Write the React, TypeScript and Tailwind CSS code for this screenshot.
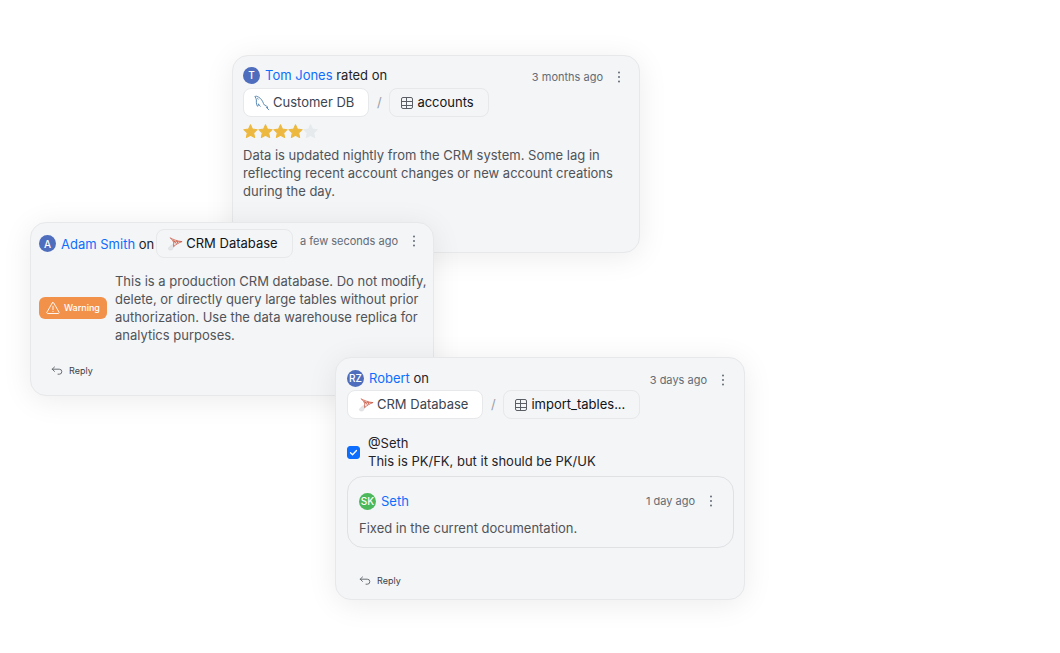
import type { ReactNode } from 'react';
import clsx from 'clsx';

interface HeaderProps {
  initials: string;
  color: string;
  name: string;
  children?: ReactNode;
}

interface ChipProps {
  icon: ReactNode;
  children: ReactNode;
  filled?: boolean;
}

const MySqlIcon = () => (
  <svg width="16" height="16" viewBox="0 0 16 16" fill="none" stroke="#4a7fae" strokeLinecap="round" strokeLinejoin="round" className="shrink-0">
    <path d="M1.2 1.8C1 1 2 .8 2.8 1.4c2.4.6 4.6 2.6 6 5.4.5 1.2.8 2.4 1.6 3.2l2.2 1.2 1.4 1.2-1.6.1 2.4 2.2" strokeWidth="0.9" />
    <path d="M1.2 1.8c.6 1.2 1 2 1.2 3.2.1 1.4-.3 3 .2 4.6.3 1 1 2 1.400 1.600.4-.5 0-1.600.4-2.400.6.8 1 1.800 1.800 2.500" strokeWidth="0.9" />
    <path d="M3.6 3.4l.5.8" strokeWidth="0.8" />
  </svg>
);

const SqlServerIcon = () => (
  <svg width="16" height="16" viewBox="0 0 16 16" fill="none" strokeLinecap="round" strokeLinejoin="round" className="shrink-0">
    <path d="M6 8.4C3.600 9.600 1.600 11.200 1.400 12.800c.2 1.200 2 1.400 3.800.8l1.600-3z" fill="#e4e5e8" stroke="#d3d5d8" strokeWidth="0.6" />
    <path d="M3.400 2c1.600 1.600 2.300 2.700 2.800 3.800l8.600-.2C10.600 5 6.700 3.700 3.400 2z" fill="#f0d3c8" stroke="#cf6350" strokeWidth="0.7" />
    <path d="M14.800 5.600C11.600 6.800 9 8.400 6.600 10.600l.2-4.600M6.400 4l2.800 3.600M9.800 4.800l.8 2" stroke="#c9503c" strokeWidth="0.8" />
  </svg>
);

const TableIcon = () => (
  <svg width="14" height="14" viewBox="0 0 14 14" fill="none" stroke="#5a5e65" className="shrink-0">
    <rect x="1.5" y="1.5" width="11" height="11" rx="1.5" />
    <path d="M1.5 5.5h11M1.5 9.5h11M6.5 1.5v11" />
  </svg>
);

const ReplyIcon = () => (
  <svg width="12" height="12" viewBox="0 0 12 12" fill="none" stroke="#5b6067" strokeWidth="0.9" strokeLinecap="round" strokeLinejoin="round">
    <path d="M3.5 2L1.2 4.200l2.300 2.200M1.200 4.200h7.100a2.500 2.500 0 0 1 0 5H7" />
  </svg>
);

const WarningIcon = () => (
  <svg width="14" height="14" viewBox="0 0 14 14" fill="none" stroke="#fff" strokeWidth="0.9" strokeLinecap="round" strokeLinejoin="round">
    <path d="M6.300 1.900L.9 11.300c-.3.600.1 1.200.7 1.200h10.800c.6 0 1-.6.7-1.200L7.700 1.900c-.3-.5-1.100-.5-1.400 0z" />
    <path d="M7 5.200v3.400M7 10.300v.2" />
  </svg>
);

const Star = ({ on }: { on: boolean }) => (
  <svg width="15" height="15" viewBox="1 1 22 22" fill={on ? '#edb83f' : '#e6eaec'} stroke={on ? '#edb83f' : '#e6eaec'} strokeWidth="1.5" strokeLinejoin="round">
    <path d="M12 2.200l2.900 6.300 6.900.8-5.100 4.700 1.400 6.800L12 17.400l-6.100 3.400 1.400-6.800-5.100-4.700 6.900-.8z" />
  </svg>
);

const Header: React.FC<HeaderProps> = ({ initials, color, name, children }) => (
  <div className="flex items-center gap-[5px]">
    <span className={clsx('flex size-[17px] shrink-0 items-center justify-center rounded-full text-[10px] font-medium leading-none text-white', color)}>
      {initials}
    </span>
    <p className="whitespace-nowrap text-[13px] leading-5 text-[#1f2328]">
      <a href="#" className="text-[#0d6efd]">{name}</a> {children}
    </p>
  </div>
);

const Chip: React.FC<ChipProps> = ({ icon, children, filled }) => (
  <a
    href="#"
    className={clsx(
      'flex h-[29px] items-center gap-[3px] whitespace-nowrap rounded-lg border border-[#e6e8ea] pl-[10px] pr-[14px] text-[13px]',
      filled ? 'bg-white text-[#3c4450]' : 'text-[#111317]'
    )}
  >
    {icon}
    {children}
  </a>
);

const Meta = ({ time }: { time: string }) => (
  <div className="ml-auto flex shrink-0 items-center gap-2">
    <time className="whitespace-nowrap text-[11px] leading-4 text-[#646b75]">{time}</time>
    <button type="button" aria-label="More actions" className="flex h-4 w-4 items-center justify-center">
      <svg width="4" height="12" viewBox="0 0 4 12" fill="#565d68">
        <circle cx="2" cy="1.5" r="0.9" />
        <circle cx="2" cy="6" r="0.9" />
        <circle cx="2" cy="10.5" r="0.9" />
      </svg>
    </button>
  </div>
);

const Reply = () => (
  <button type="button" className="flex items-center gap-[6px] text-[9px] leading-4 text-[#3c4148]">
    <ReplyIcon />
    Reply
  </button>
);

const cardStyle = 'rounded-[16px] border border-[#e6e8ea] bg-[#f3f5f7] shadow-[0_4px_30px_rgba(0,0,0,0.08)]';

export default function App() {
  return (
    <main className="flex min-h-screen flex-col items-start bg-white pt-[55px] font-['Inter',sans-serif]">
      {/* Rating */}
      <article className={clsx('ml-[232px] w-[408px] px-[10px] pt-[9px] pb-[52px]', cardStyle)}>
        <div className="flex items-end pr-[2px]">
          <Header initials="T" color="bg-[#4e6dbd]" name="Tom Jones">rated on</Header>
          <Meta time="3 months ago" />
        </div>
        <div className="mt-[3px] flex items-center">
          <Chip icon={<MySqlIcon />} filled>Customer DB</Chip>
          <span className="w-5 text-center text-[13px] text-[#9aa0a7]">/</span>
          <Chip icon={<TableIcon />}>accounts</Chip>
        </div>
        <div className="mt-[7px] flex" role="img" aria-label="4 out of 5 stars">
          {[1, 2, 3, 4, 5].map((n) => (
            <Star key={n} on={n <= 4} />
          ))}
        </div>
        <p className="mt-[7px] text-[13px] leading-[18px] text-[#505358]">
          Data is updated nightly from the CRM system. Some lag in reflecting recent account changes or new account creations during the day.
        </p>
      </article>

      {/* Warning */}
      <article className={clsx('-mt-[31px] ml-[30px] w-[404px] pl-2 pr-1 pt-[6px] pb-4', cardStyle)}>
        <div className="flex items-start pr-[7px]">
          <div className="flex items-center gap-[2px]">
            <Header initials="A" color="bg-[#4e6dbd]" name="Adam Smith">on</Header>
            <Chip icon={<SqlServerIcon />}>CRM Database</Chip>
          </div>
          <div className="ml-auto pt-1">
            <Meta time="a few seconds ago" />
          </div>
        </div>
        <div className="mt-[14px] flex items-center gap-2">
          <span className="flex h-[22px] shrink-0 items-center gap-1 rounded-md bg-[#f2914a] px-[7px] text-[9px] font-medium text-white">
            <WarningIcon />
            Warning
          </span>
          <p className="text-[13px] leading-[18px] text-[#505358]">
            This is a production CRM database. Do not modify, delete, or directly query large tables without prior authorization. Use the data warehouse replica for analytics purposes.
          </p>
        </div>
        <div className="mt-[19px] pl-3">
          <Reply />
        </div>
      </article>

      {/* Task with a reply */}
      <article className={clsx('-mt-[39px] ml-[335px] w-[410px] pl-[11px] pr-[10px] pt-[10px] pb-[10px]', cardStyle)}>
        <div className="flex items-end pr-[3px]">
          <Header initials="RZ" color="bg-[#4e6dbd]" name="Robert">on</Header>
          <Meta time="3 days ago" />
        </div>
        <div className="mt-[2px] flex items-center">
          <Chip icon={<SqlServerIcon />} filled>CRM Database</Chip>
          <span className="w-5 text-center text-[13px] text-[#9aa0a7]">/</span>
          <Chip icon={<TableIcon />}>import_tables...</Chip>
        </div>
        <label className="mt-[15px] flex items-center gap-2 text-[13px] leading-[18px] text-[#1f2328]">
          <span className="grid shrink-0">
            <input type="checkbox" defaultChecked className="peer col-start-1 row-start-1 size-[13px] appearance-none rounded-[3px] border border-[#0d6efd] checked:bg-[#0d6efd]" />
            <svg width="13" height="13" viewBox="0 0 13 13" fill="none" stroke="#fff" strokeWidth="1.3" strokeLinecap="round" strokeLinejoin="round" className="pointer-events-none invisible col-start-1 row-start-1 peer-checked:visible">
              <path d="M3.5 6.7l2 2 4-4.2" />
            </svg>
          </span>
          <span>
            @Seth
            <br />
            This is PK/FK, but it should be PK/UK
          </span>
        </label>
        <section className="mt-[6px] rounded-[16px] border border-[#dfe2e5] px-[11px] pt-[14px] pb-[10px]">
          <div className="flex items-center pr-[3px]">
            <Header initials="SK" color="bg-[#4cb85c]" name="Seth" />
            <Meta time="1 day ago" />
          </div>
          <p className="mt-2 text-[13px] leading-[18px] text-[#505358]">Fixed in the current documentation.</p>
        </section>
        <div className="mt-[25px] pl-3">
          <Reply />
        </div>
      </article>
    </main>
  );
}
